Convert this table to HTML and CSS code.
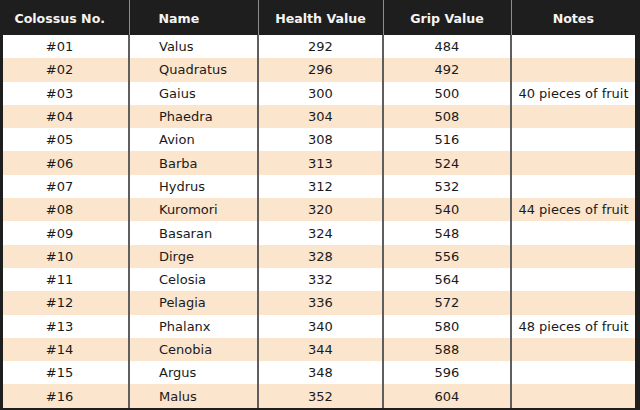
FILE: index.html
```html
<!DOCTYPE html>
<html>
<head>
<meta charset="utf-8">
<link rel="stylesheet" href="styles.css">
</head>
<body>
<table class="colossi">
  <colgroup>
    <col class="c-no"><col class="c-name"><col class="c-hp"><col class="c-grip"><col class="c-notes">
  </colgroup>
  <thead>
    <tr><th class="no">Colossus No.</th><th class="name">Name</th><th>Health Value</th><th>Grip Value</th><th>Notes</th></tr>
  </thead>
  <tbody>
    <tr><td class="no">#01</td><td class="name">Valus</td><td>292</td><td>484</td><td></td></tr>
    <tr><td class="no">#02</td><td class="name">Quadratus</td><td>296</td><td>492</td><td></td></tr>
    <tr><td class="no">#03</td><td class="name">Gaius</td><td>300</td><td>500</td><td>40 pieces of fruit</td></tr>
    <tr><td class="no">#04</td><td class="name">Phaedra</td><td>304</td><td>508</td><td></td></tr>
    <tr><td class="no">#05</td><td class="name">Avion</td><td>308</td><td>516</td><td></td></tr>
    <tr><td class="no">#06</td><td class="name">Barba</td><td>313</td><td>524</td><td></td></tr>
    <tr><td class="no">#07</td><td class="name">Hydrus</td><td>312</td><td>532</td><td></td></tr>
    <tr><td class="no">#08</td><td class="name">Kuromori</td><td>320</td><td>540</td><td>44 pieces of fruit</td></tr>
    <tr><td class="no">#09</td><td class="name">Basaran</td><td>324</td><td>548</td><td></td></tr>
    <tr><td class="no">#10</td><td class="name">Dirge</td><td>328</td><td>556</td><td></td></tr>
    <tr><td class="no">#11</td><td class="name">Celosia</td><td>332</td><td>564</td><td></td></tr>
    <tr><td class="no">#12</td><td class="name">Pelagia</td><td>336</td><td>572</td><td></td></tr>
    <tr><td class="no">#13</td><td class="name">Phalanx</td><td>340</td><td>580</td><td>48 pieces of fruit</td></tr>
    <tr><td class="no">#14</td><td class="name">Cenobia</td><td>344</td><td>588</td><td></td></tr>
    <tr><td class="no">#15</td><td class="name">Argus</td><td>348</td><td>596</td><td></td></tr>
    <tr><td class="no">#16</td><td class="name">Malus</td><td>352</td><td>604</td><td></td></tr>
  </tbody>
</table>
</body>
</html>
```

FILE: styles.css
```css
html, body {
  margin: 0;
  padding: 0;
  background: #1e1e1e;
  width: 640px;
  height: 410px;
  overflow: hidden;
}

.colossi {
  margin-left: 3px;
  width: 632px;
  table-layout: fixed;
  border-collapse: collapse;
  font-family: "DejaVu Sans", Verdana, sans-serif;
  font-size: 13px;
}

.c-no { width: 126px; }
.c-name { width: 129px; }
.c-hp { width: 125px; }
.c-grip { width: 128px; }
.c-notes { width: 124px; }

.colossi th {
  height: 33px;
  padding: 2px 0 0 0;
  background: #1e1e1e;
  color: #f4f4f4;
  font-size: 12.6px;
  font-weight: bold;
  text-align: center;
  border-left: 1px solid #8c8c8c;
  vertical-align: middle;
}

.colossi th:first-child { border-left: none; }

.colossi td {
  height: 23.3px;
  padding: 0;
  color: #1a1a1a;
  text-align: center;
  border-left: 2px solid #5e5e5e;
  background: #ffffff;
  white-space: nowrap;
}

.colossi td:first-child { border-left: none; }

.colossi tbody tr:nth-child(even) td { background: #fce5cd; }

.colossi .no { padding-right: 12px; }
.colossi .name { text-align: left; padding-left: 29px; }
```
